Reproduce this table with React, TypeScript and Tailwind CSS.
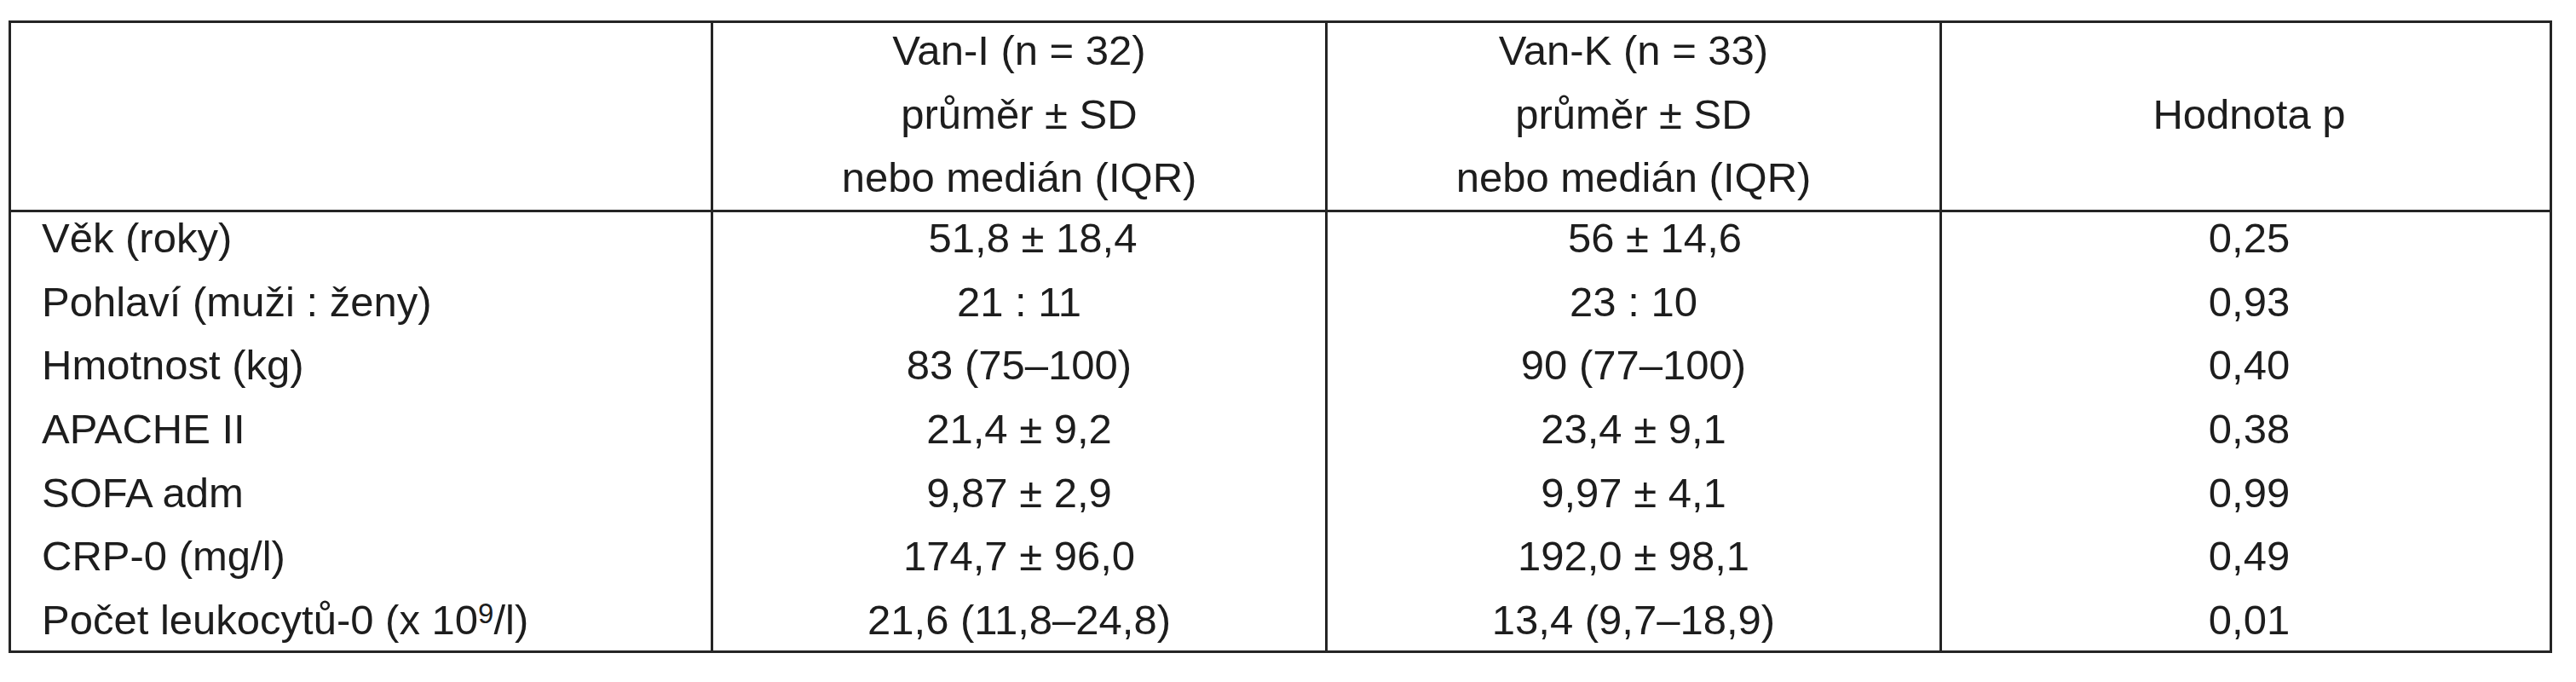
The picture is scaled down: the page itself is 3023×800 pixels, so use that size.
import React from 'react';

type Row = {
  label: React.ReactNode;
  vanI: string;
  vanK: string;
  p: string;
  shiftI?: string;
  shiftK?: string;
};

const rows: Row[] = [
  { label: 'Věk (roky)', vanI: '51,8 ± 18,4', vanK: '56 ± 14,6', p: '0,25', shiftI: 'pl-[32px]', shiftK: 'pl-[50px]' },
  { label: 'Pohlaví (muži : ženy)', vanI: '21 : 11', vanK: '23 : 10', p: '0,93' },
  { label: 'Hmotnost (kg)', vanI: '83 (75–100)', vanK: '90 (77–100)', p: '0,40' },
  { label: 'APACHE II', vanI: '21,4 ± 9,2', vanK: '23,4 ± 9,1', p: '0,38' },
  { label: 'SOFA adm', vanI: '9,87 ± 2,9', vanK: '9,97 ± 4,1', p: '0,99' },
  { label: 'CRP-0 (mg/l)', vanI: '174,7 ± 96,0', vanK: '192,0 ± 98,1', p: '0,49' },
  {
    label: (
      <>
        Počet leukocytů-0 (x 10
        <sup className="relative top-[-13px] align-baseline text-[33px] leading-none">9</sup>
        /l)
      </>
    ),
    vanI: '21,6 (11,8–24,8)',
    vanK: '13,4 (9,7–18,9)',
    p: '0,01',
  },
];

const line = 'h-[74.67px] leading-[74.67px] whitespace-nowrap';

const GroupHeader: React.FC<{ name: string }> = ({ name }) => (
  <div className="-mt-[5px] flex flex-col items-center">
    <div className={line}>{name}</div>
    <div className={line}>průměr ± SD</div>
    <div className={line}>nebo medián (IQR)</div>
  </div>
);

const App: React.FC = () => {
  return (
    <div
      className="w-[3023px] h-[800px] bg-white pt-[24px] pl-[10px] text-[49px] text-[#1d1d1d]"
      style={{ fontFamily: '"Liberation Sans", Arial, sans-serif' }}
    >
      <div className="w-[2985px] border-[3px] border-[#252525]">
        {/* Header */}
        <div className="grid grid-cols-[824px_721px_721px_713px] h-[222px] border-b-[3px] border-[#252525]">
          <div className="border-r-[3px] border-[#252525]" />
          <div className="border-r-[3px] border-[#252525]">
            <GroupHeader name="Van-I (n = 32)" />
          </div>
          <div className="border-r-[3px] border-[#252525]">
            <GroupHeader name="Van-K (n = 33)" />
          </div>
          <div className="-mt-[5px] flex flex-col items-center pl-[8px]">
            <div className={line} />
            <div className={line}>Hodnota p</div>
          </div>
        </div>

        {/* Body */}
        <div className="grid grid-cols-[824px_721px_721px_713px] h-[514px]">
          <div className="border-r-[3px] border-[#252525] pl-[36px]">
            <div className="-mt-[7px] flex flex-col">
              {rows.map((r, i) => (
                <div key={i} className={line}>
                  {r.label}
                </div>
              ))}
            </div>
          </div>
          <div className="border-r-[3px] border-[#252525]">
            <div className="-mt-[7px] flex flex-col items-center">
              {rows.map((r, i) => (
                <div key={i} className={`${line} ${r.shiftI ?? ''}`}>
                  {r.vanI}
                </div>
              ))}
            </div>
          </div>
          <div className="border-r-[3px] border-[#252525]">
            <div className="-mt-[7px] flex flex-col items-center">
              {rows.map((r, i) => (
                <div key={i} className={`${line} ${r.shiftK ?? ''}`}>
                  {r.vanK}
                </div>
              ))}
            </div>
          </div>
          <div>
            <div className="-mt-[7px] flex flex-col items-center pl-[8px]">
              {rows.map((r, i) => (
                <div key={i} className={line}>
                  {r.p}
                </div>
              ))}
            </div>
          </div>
        </div>
      </div>
    </div>
  );
};

export default App;
